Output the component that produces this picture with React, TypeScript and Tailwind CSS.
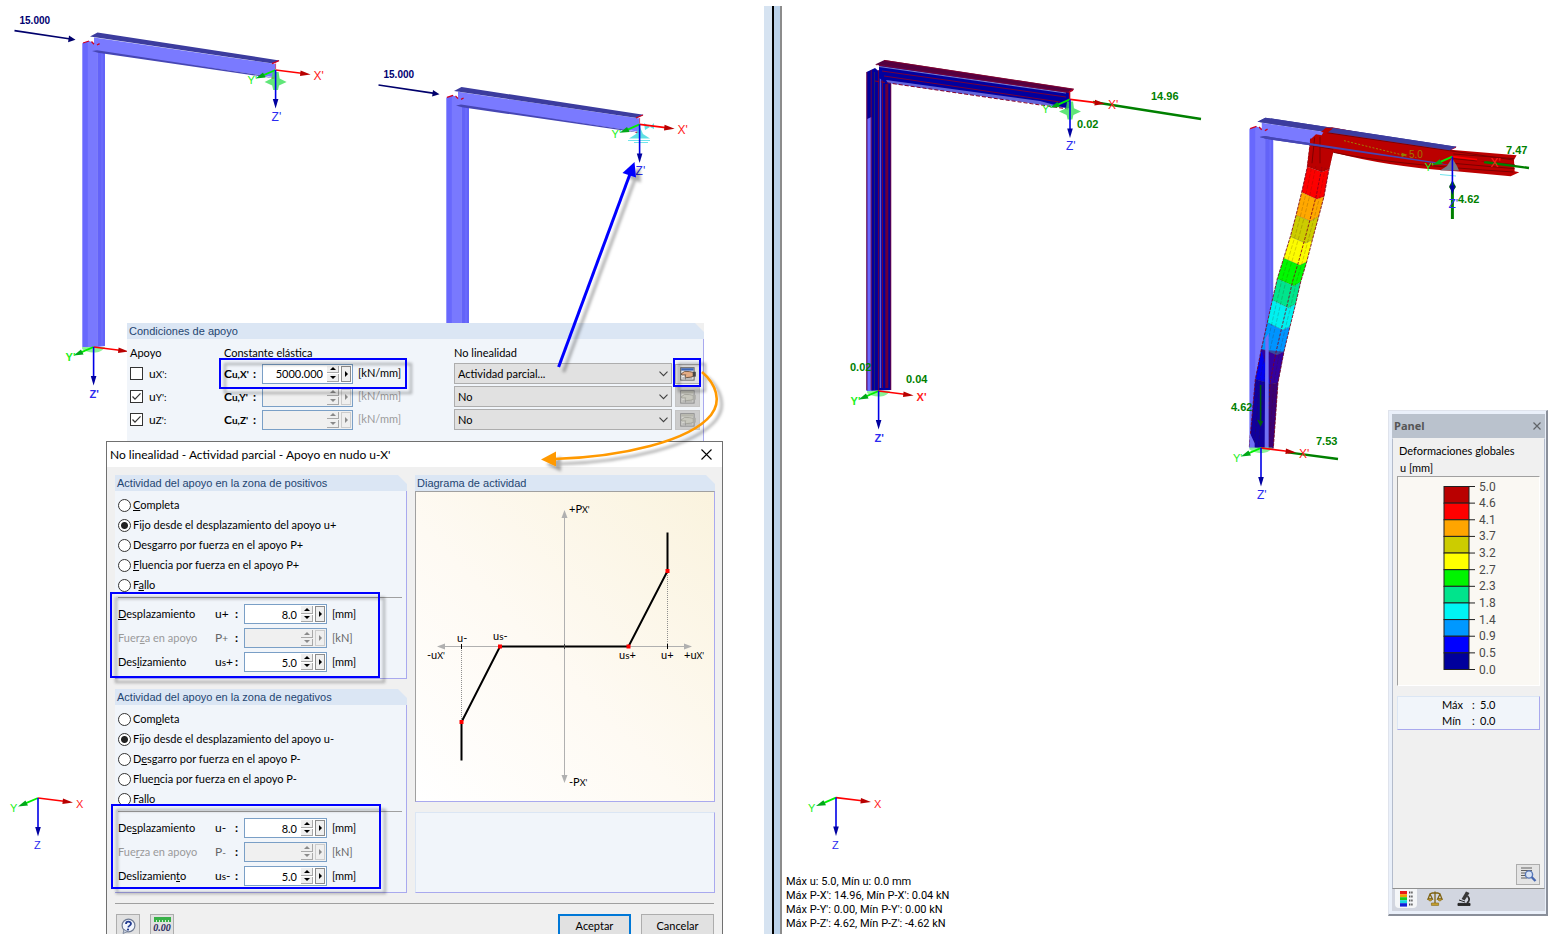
import type { ReactNode } from 'react'

const ui = "font-['Lato','Liberation_Sans',sans-serif]"
const arial = "font-['Liberation_Sans',sans-serif]"

/* ---------- 3D model drawing ---------- */

type AxesProps = {
  x: number
  y: number
  prime?: boolean
  bold?: boolean
  showX?: boolean
}

function Axes({ x, y, prime = true, bold = false, showX = true }: AxesProps) {
  const p = prime ? "'" : ''
  const size = bold || !prime ? 11 : 12
  return (
    <g transform={`translate(${x} ${y})`} fontSize={size} fontWeight={bold ? 700 : 400}>
      <path d="M0 0 L26 3.2" stroke="#ff0000" strokeWidth="1.6" />
      <path d="M25 0.4 L35 4.4 L24.4 6 Z" fill="#b80000" />
      <path d="M0 0 L-12 5.2" stroke="#00f000" strokeWidth="1.8" />
      <path d="M-20 8.4 L-12.6 2.6 L-10 7.6 Z" fill="#00a818" />
      <path d="M0 0 V30" stroke="#0000e8" strokeWidth="1.6" />
      <path d="M-2.8 29 H2.8 L0 38.5 Z" fill="#0000a0" />
      {showX && <text x="38" y="10" fill="#ff2020">X{p}</text>}
      <text x="-28" y="14" fill="#20f020" fontSize="11">Y{p}</text>
      <text x="-4" y="51" fill="#2a2af0">Z{p}</text>
    </g>
  )
}

function Flanges() {
  return (
    <g>
      <path d="M90 36.6 L97.5 32.6 L279.5 60.4 L273 63.6 Z" fill="#3c3c9e" />
      <path d="M92 51 L97 50.2 L262 75.4 L275 78.4 L98 52.8 Z" fill="#4646b4" />
    </g>
  )
}

function Frame() {
  return (
    <g>
      <path d="M82.3 43.2 L89 41 L96.5 44 V347 H82.3 Z" fill="#6868fd" />
      <path d="M87.8 41.4 L97.2 44.5 V347 H87.8 Z" fill="#7979fe" />
      <path d="M97.2 50 L105 52 V346 L97.2 347 Z" fill="#6363f8" />
      <path d="M102 52 V346" stroke="#7272ff" strokeWidth="1" />
      <path d="M94 37.4 L275.6 64 V77.4 L97 51.4 L94 49 Z" fill="#7a7aff" />
      <Flanges />
      <path d="M90 38.6 L93.6 37.4 V42.5 L91 40.5 Z" fill="#ffffff" />
      <path d="M83 43 L89 41 M91.5 41.5 L94 44.2 M97 45 L99.6 43.6 M272 63.6 L279 60.6 M271.6 78 H274.5" stroke="#d00020" strokeWidth="1.3" />
      <path d="M275.6 63.5 V69" stroke="#d03060" strokeWidth="0.8" />
    </g>
  )
}

function Load({ x, y }: { x: number; y: number }) {
  return (
    <g transform={`translate(${x} ${y})`}>
      <text x="5" y="-7" fontSize="10" fontWeight="700" fill="#000070">15.000</text>
      <path d="M0 0 L56 8.4" stroke="#00006c" strokeWidth="1.6" />
      <path d="M54.5 5 L61 9.2 L53.6 11.6 Z" fill="#00006c" />
    </g>
  )
}

function Support({ x, y }: { x: number; y: number }) {
  return (
    <g transform={`translate(${x} ${y})`} fill="#38e058" opacity="0.8">
      <path d="M-11 12 L-4 8.6 L-3 2 H3 L4 8.6 L11 12 L3.4 15.4 L2.4 20 H-2.4 L-3.4 15.4 Z" />
    </g>
  )
}

function BaseSupport({ x, y }: { x: number; y: number }) {
  return <path transform={`translate(${x} ${y})`} d="M-11.5 0 H11.5 C9 4 5 5.6 0 5.6 C-5 5.6 -9 4 -11.5 2 Z" fill="#6cf07c" opacity="0.8" />
}

function LeftModel() {
  return (
    <svg className={`absolute left-0 top-0 ${arial}`} width="764" height="934" viewBox="0 0 764 934" aria-hidden="true">
      <Load x={14.5} y={30.6} />
      <Load x={378.5} y={85} />
      <Frame />
      <Support x={275.6} y={70} />
      <Axes x={275.6} y={70} />
      <BaseSupport x={93.6} y={347} />
      <Axes x={93.6} y={347} bold showX={false} />
      <g transform="translate(364 54.4)">
        <Frame />
      </g>
      <path d="M629 138.5 L636 134 L639.5 126 L643 134 L650 138.5 Z M644 123 L650 127 L654 123 V129 L650 127 L645 130 Z" fill="#38d8dc" opacity="0.8" />
      <path d="M628 140.5 H650 M634 142.5 H648" stroke="#70e4ec" />
      <Axes x={639.6} y={124.4} />
      <Axes x={38} y={798} prime={false} />
    </svg>
  )
}

// contour bands of the deformed column, top to bottom
const bands = [
  { c: '#b90000', l: [272, 116], m: [300, 122], r: [340, 140] },
  { c: '#fc0000', l: [262, 200], m: [306, 216], r: [327, 208] },
  { c: '#ffa800', l: [245, 277], m: [290, 298], r: [312, 290] },
  { c: '#cccc00', l: [228, 346], m: [272, 364], r: [296, 350] },
  { c: '#fcfc00', l: [211, 410], m: [256, 430], r: [277, 420] },
  { c: '#00f800', l: [191, 475], m: [240, 496], r: [260, 486] },
  { c: '#00e48c', l: [172, 536], m: [222, 558], r: [242, 546] },
  { c: '#00f0f0', l: [157, 600], m: [205, 624], r: [227, 612] },
  { c: '#0094ff', l: [142, 668], m: [188, 690], r: [210, 680] },
  { c: '#0000f0', l: [124, 748], m: [170, 765], r: [192, 755] },
  { c: '#10009c', l: [106, 838], m: [152, 852], r: [174, 848] },
  { c: '#10009c', l: [88, 1040], m: [130, 1048], r: [160, 1045] },
]

function along(t: number) {
  return 'M' + bands.map((b) => `${b.l[0] + (b.r[0] - b.l[0]) * t} ${b.l[1] + (b.r[1] - b.l[1]) * t}`).join(' L')
}

function DeformedShape() {
  return (
    <g transform="translate(1220 100) scale(0.3333)">
      {bands.slice(0, -1).map((b, i) => {
        const n = bands[i + 1]
        return (
          <path key={i} d={`M${b.l} L${b.m} L${b.r} L${n.r} L${n.m} L${n.l} Z`} fill={b.c} stroke="#00000040" strokeWidth="1.5" />
        )
      })}
      <path d="M124 748 L192 755 L174 848 L160 1045 H140 L150 850 Z" fill="#68004c" opacity="0.5" />
      <path d={along(0.2) + along(0.38) + along(0.82)} fill="none" stroke="#40200060" strokeWidth="1.6" strokeDasharray="12 5" />
      <path d={along(0) + along(0.66) + along(1)} fill="none" stroke="#80001c" strokeWidth="2.4" strokeDasharray="9 4" />
      <path d="M136 715 L146 700 V1045 H134 Z M90 1000 L104 1030 V1045 H88 Z" fill="#7070f4" />
      <path d="M272 118 L288 103 L305 106 L318 84 L336 82 L700 150 L890 166 L882 180 L884 214 L898 217 L872 229 L700 213 Q500 200 340 157 L328 205 L262 196 Z" fill="#bb0000" />
      <path d="M274 136 L340 148 M320 98 L880 180 M340 157 Q500 192 880 216 M700 162 L882 176 M700 176 L884 194 M700 190 L884 206 M300 110 V190 M284 112 L276 190" fill="none" stroke="#7c0000" strokeWidth="3" />
      <path d="M372 122 L560 168" stroke="#a08000" strokeWidth="3" strokeDasharray="6 5" />
      <path d="M545 158 L562 164 L545 171 Z" fill="#908000" />
    </g>
  )
}

function RightModel() {
  return (
    <svg className={`absolute left-0 top-0 ${arial}`} width="780" height="934" viewBox="782 0 780 934" aria-hidden="true">
      <path d="M866.6 72 L875 68 L891 82 V390 L866.6 391 Z" fill="#00009c" />
      <path d="M867.2 119 L871.4 117 V391 H867.2 Z" fill="#6a6aff" />
      <path d="M866.8 72 V390 M871.2 70 V390 M878.4 70 V391 M882.5 72 V388 M890.8 84 V390" stroke="#780038" strokeWidth="0.9" />
      <path d="M874.5 72 V390" stroke="#20206c" strokeWidth="1" />
      <path d="M880.5 74 V388" stroke="#5a5ad8" strokeWidth="1.4" />
      <path d="M886.8 84 V388" stroke="#68003c" strokeWidth="3" />
      <path d="M879 64.5 L1070 91 V108.5 L886 82.5 L879 78 Z" fill="#0000a0" />
      <path d="M886 80 L1040 101 L1066 108 L888 83 Z" fill="#6464d8" />
      <path d="M875 64.6 L884.5 60 L1074 89 L1069 92.4 Z" fill="#540040" />
      <path d="M879 66.5 L1066 93" stroke="#7a7ac8" strokeWidth="1.2" />
      <path d="M884 60.4 L1074 89.2 M876 64.8 L1069 92.4 M882 71 L1066 97 M884 76 L1060 102" fill="none" stroke="#84002c" strokeWidth="0.9" />
      <path d="M875 81 L892 83.5 L1068 109" fill="none" stroke="#84002c" strokeWidth="1" strokeDasharray="4 2" />
      <path d="M875 66 L878.6 65 V69 L876 68 Z" fill="#ffffff" />
      <path d="M1069 92 L1073 90 M1069.6 92 V100" stroke="#c00020" strokeWidth="1.4" />
      <Support x={1070} y={99.6} />
      <path d="M1093 102 L1201 119" stroke="#008000" strokeWidth="2.4" />
      <Axes x={1070} y={99.4} />
      <BaseSupport x={878.6} y={391} />
      <Axes x={878.6} y={391} bold />

      <g transform="translate(1163 83.4) scale(1.05)">
        <Frame />
      </g>
      <DeformedShape />
      <g transform="translate(1163 83.4) scale(1.05)">
        <Flanges />
      </g>
      <path d="M1321 132 L1326 127.5 L1333 128.4 L1327 133 Z" fill="#b90000" />
      <path d="M1440 170.5 L1447 166 L1452 158 L1457 166 L1459 170.5 Z" fill="#7c7c88" />
      <path d="M1440 174.5 L1456 176" stroke="#70e4ec" />
      <path d="M1484 162 L1529 168" stroke="#008000" strokeWidth="2.4" />
      <path d="M1452.4 185 V219" stroke="#008000" strokeWidth="3" />
      <path d="M1449 187 L1452.4 180 L1456 187 L1452.4 192 Z" fill="#006000" />
      <Axes x={1452.4} y={156.6} />
      <path d="M1260.6 385 V424 M1258 420 L1260.6 425 L1262.4 421" fill="none" stroke="#005c10" strokeWidth="1.6" />
      <path d="M1288 452.4 L1338 459" stroke="#008000" strokeWidth="2.4" />
      <BaseSupport x={1261} y={447.6} />
      <Axes x={1261} y={448} />
      <Axes x={836} y={797.6} prime={false} />

      <g fontSize="11" fontWeight="700" fill="#008000">
        <text x="1151" y="100">14.96</text>
        <text x="1077" y="128">0.02</text>
        <text x="850" y="371">0.02</text>
        <text x="906" y="383">0.04</text>
        <text x="1506" y="154">7.47</text>
        <text x="1458" y="203">4.62</text>
        <text x="1231" y="411">4.62</text>
        <text x="1316" y="445">7.53</text>
      </g>
      <text x="1409" y="158" fontSize="10" fill="#a07800">5.0</text>
    </svg>
  )
}

/* ---------- form controls ---------- */

type StepperProps = {
  id: string
  value?: string
  disabled?: boolean
}

function Stepper({ id, value = '', disabled = false }: StepperProps) {
  const tri = disabled ? '#8a8a8a' : '#000000'
  return (
    <span className={`flex h-5 w-full items-center border border-[#7a9fc6] pr-px ${disabled ? 'bg-[#f0f0f0]' : 'bg-white'}`}>
      <input
        id={id}
        type="text"
        defaultValue={value}
        disabled={disabled}
        className="h-full w-0 min-w-0 flex-1 bg-transparent pr-1 text-right text-[11px] leading-4 text-black outline-none"
      />
      <span className="flex h-4 w-3 flex-col gap-px">
        <button type="button" disabled={disabled} aria-label="Aumentar" className="flex flex-1 items-center justify-center border-b border-r border-[#a8a8a8] bg-[#efefef]">
          <svg width="6" height="3" viewBox="0 0 6 3"><path d="M0 3 L3 0 L6 3 Z" fill={tri} /></svg>
        </button>
        <button type="button" disabled={disabled} aria-label="Disminuir" className="flex flex-1 items-center justify-center border-b border-r border-[#a8a8a8] bg-[#efefef]">
          <svg width="6" height="3" viewBox="0 0 6 3"><path d="M0 0 H6 L3 3 Z" fill={tri} /></svg>
        </button>
      </span>
      <button type="button" disabled={disabled} aria-label="Más opciones" className={`ml-0.5 flex h-4 w-[10px] items-center justify-center border bg-[#efefef] ${disabled ? 'border-[#cccccc]' : 'border-[#8c8c8c]'}`}>
        <svg width="3" height="6" viewBox="0 0 3 6"><path d="M0 0 L3 3 L0 6 Z" fill={tri} /></svg>
      </button>
    </span>
  )
}

function GroupTitle({ children }: { children: ReactNode }) {
  return (
    <div className="flex h-4 bg-[#f0f0f0]">
      <h2 className={`flex-1 bg-[#dbe6f4] pl-0.5 text-[11px] leading-4 text-[#1f4571] ${arial}`}>{children}</h2>
      <svg className="h-4 w-[11px]" viewBox="0 0 11 16" aria-hidden="true">
        <path d="M0 0 L2 0 L11 9 V16 H0 Z" fill="#dbe6f4" />
      </svg>
    </div>
  )
}

function EditIcon({ off = false }: { off?: boolean }) {
  return (
    <svg width="16" height="14" viewBox="0 0 16 14" aria-hidden="true" opacity={off ? 0.6 : 1}>
      <rect x="0.7" y="0.7" width="13.4" height="12.4" fill={off ? '#d8d8d0' : '#f0f0f0'} stroke="#606060" />
      <rect x="1.2" y="1.2" width="12.4" height="2.4" fill={off ? '#a8a898' : '#3c64b4'} />
      <path d="M2.4 11 H12.4 M5.5 9.6 V12.5" stroke="#707070" strokeWidth="0.8" />
      <path d="M1 7 L4.6 4.4 L9.5 4.6 L13.4 5.4 V9.4 L10.4 10.2 L6.6 10.6 L4.8 9.2 L5.8 7.8 L2 8 Z" fill={off ? '#c4c4b4' : '#e4ac84'} stroke={off ? '#808070' : '#5c4434'} strokeWidth="0.8" />
      <rect x="12.8" y="4.8" width="3" height="4.8" fill={off ? '#989890' : '#484848'} />
    </svg>
  )
}

const supports = [
  { axis: "X'", checked: false, value: '5000.000', mode: 'Actividad parcial...' },
  { axis: "Y'", checked: true, value: '', mode: 'No' },
  { axis: "Z'", checked: true, value: '', mode: 'No' },
]

function SupportConditions() {
  return (
    <section className={`absolute left-[127px] top-[323px] w-[577px] ${ui} text-[11px] text-black`}>
      <GroupTitle>Condiciones de apoyo</GroupTitle>
      <div className="border-r border-[#a9a9ee] bg-[#f1f5fa] pb-8 pl-[3px] pt-1.5">
        <div className="mb-px grid h-4 grid-cols-[94px_230px_1fr] items-center leading-4">
          <span>Apoyo</span>
          <span>Constante elástica</span>
          <span>No linealidad</span>
        </div>
        {supports.map((s) => {
          const off = !s.value
          return (
            <div key={s.axis} className="grid h-[23px] grid-cols-[19px_75px_38px_96px_96px_221px_25px] items-center">
              <span className="relative block size-[13px]">
                <input
                  id={`fix-${s.axis}`}
                  type="checkbox"
                  defaultChecked={s.checked}
                  className="peer block size-[13px] appearance-none border border-[#333333] bg-white"
                />
                <svg className="pointer-events-none absolute inset-0 hidden size-[13px] peer-checked:block" viewBox="0 0 13 13" aria-hidden="true">
                  <path d="M2.5 6.5 L5 9.2 L10.5 3.4" fill="none" stroke="#333333" strokeWidth="1.2" />
                </svg>
              </span>
              <label htmlFor={`fix-${s.axis}`} className="text-[12px] leading-4">
                u<span className="text-[10px]">{s.axis}:</span>
              </label>
              <label htmlFor={`spring-${s.axis}`} className="flex justify-between pr-1.5 text-[12px] font-bold leading-4">
                <span>C<span className="text-[10px]">u,{s.axis}</span></span>
                <span>:</span>
              </label>
              <span className="block w-[91px]">
                <Stepper id={`spring-${s.axis}`} value={s.value} disabled={off} />
              </span>
              <span className={off ? 'text-[#9a9a9a]' : ''}>[kN/mm]</span>
              <span className="relative block w-[218px]">
                <select aria-label={`No linealidad ${s.axis}`} defaultValue={s.mode} className="block h-[21px] w-full appearance-none border border-[#adadad] bg-[#e1e1e1] pl-[3px] text-[11px] leading-4">
                  <option>{s.mode}</option>
                </select>
                <svg className="pointer-events-none absolute right-1 top-2 h-[6px] w-[9px]" viewBox="0 0 9 6" aria-hidden="true">
                  <path d="M0.5 0.7 L4.5 4.7 L8.5 0.7" fill="none" stroke="#404040" strokeWidth="1.1" />
                </svg>
              </span>
              <button type="button" disabled={off} aria-label="Editar no linealidad" className={`flex h-5 w-[25px] items-center justify-center border ${off ? 'border-[#c4c4c4] bg-[#cccccc]' : 'border-[#adadad] bg-[#e1e1e1]'}`}>
                <EditIcon off={off} />
              </button>
            </div>
          )
        })}
      </div>
    </section>
  )
}

type ActivityGroupProps = {
  title: string
  name: string
  sign: string
  options: ReactNode[]
  labels: ReactNode[]
}

function ActivityGroup({ title, name, sign, options, labels }: ActivityGroupProps) {
  const fields = [
    { sym: <>u{sign}</>, value: '8.0', unit: '[mm]' },
    { sym: <>P<span className="text-[10px]">{sign}</span></>, value: '', unit: '[kN]' },
    { sym: <>u<span className="text-[10px]">s</span>{sign}</>, value: '5.0', unit: '[mm]' },
  ]
  return (
    <section>
      <GroupTitle>{title}</GroupTitle>
      <div className="border-b border-r border-[#a9a9ee] bg-[#f1f5fa] pb-1 pl-[3px] pr-1 pt-1">
        {options.map((o, i) => (
          <label key={i} className="flex h-5 items-center gap-0.5 text-[11px]">
            <input
              type="radio"
              name={name}
              defaultChecked={i === 1}
              className="size-[13px] appearance-none rounded-full border border-[#333333] bg-white checked:bg-[radial-gradient(circle,#222222_3px,#ffffff_4px)]"
            />
            <span>{o}</span>
          </label>
        ))}
        <hr className="mb-1 mt-0.5 border-[#a0a0a0]" />
        {fields.map((f, i) => (
          <div key={i} className={`grid h-6 grid-cols-[97px_29px_83px_1fr] items-center text-[11px] ${f.value ? '' : 'text-[#9a9a9a]'}`}>
            <label htmlFor={`${name}-${i}`}>{labels[i]}</label>
            <span className={`flex justify-between pr-1.5 text-[12px] ${f.value ? '' : 'text-[#666666]'}`}>
              <span>{f.sym}</span>
              <span className="font-bold text-black">:</span>
            </span>
            <Stepper id={`${name}-${i}`} value={f.value} disabled={!f.value} />
            <span className={`pl-[5px] ${f.value ? '' : 'text-[#666666]'}`}>{f.unit}</span>
          </div>
        ))}
      </div>
    </section>
  )
}

function ActivityDiagram() {
  return (
    <svg className="block h-[309px] w-full" viewBox="416 492 298 309" role="img" aria-label="Diagrama de actividad">
      <defs>
        <linearGradient id="sheet" x1="1" y1="0" x2="0" y2="1">
          <stop offset="0" stopColor="#faf3de" />
          <stop offset="0.55" stopColor="#fefaf3" />
          <stop offset="1" stopColor="#ffffff" />
        </linearGradient>
      </defs>
      <rect x="416" y="492" width="298" height="309" fill="url(#sheet)" />
      <path d="M564.5 514 V778 M440 646.5 H690" stroke="#b0b0b0" />
      <path d="M564.5 510 L561.5 518 H567.5 Z M564.5 783 L561.5 775 H567.5 Z M437 646.5 L445 643.5 V649.5 Z M692 646.5 L684 643.5 V649.5 Z" fill="#b0b0b0" />
      <path d="M461.5 648 V722 M667.5 571 V646" stroke="#909090" strokeDasharray="1 1" />
      <path d="M461.5 644 V649 M667.5 644 V649" stroke="#000000" />
      <path d="M667.5 532.5 V571 L628.5 646.5 H500 L461.5 722 V760.5" fill="none" stroke="#000000" strokeWidth="2" />
      <path d="M564.5 644 V649" stroke="#404040" />
      <path d="M665.5 569 h4 v4 h-4 Z M626.5 644.5 h4 v4 h-4 Z M498 644.5 h4 v4 h-4 Z M459.5 720 h4 v4 h-4 Z" fill="#ff0000" />
      <g fontSize="11" fill="#000000">
        <text x="569" y="513">+P<tspan fontSize="9">X'</tspan></text>
        <text x="569" y="786">-P<tspan fontSize="9">X'</tspan></text>
        <text x="457" y="642">u-</text>
        <text x="493" y="640">u<tspan fontSize="10">s</tspan>-</text>
        <text x="619" y="659">u<tspan fontSize="10">s</tspan>+</text>
        <text x="661" y="659">u+</text>
        <text x="684" y="659">+u<tspan fontSize="9">X'</tspan></text>
        <text x="427" y="659">-u<tspan fontSize="9">X'</tspan></text>
      </g>
    </svg>
  )
}

function NonlinearityDialog() {
  return (
    <div role="dialog" aria-labelledby="dialog-title" className={`absolute left-[106px] top-[441px] w-[617px] border border-[#707070] bg-[#f0f0f0] ${ui} text-black`}>
      <div className="flex h-[25px] items-center justify-between bg-white pl-[3px] pr-2.5">
        <h1 id="dialog-title" className="text-[12px] leading-4">No linealidad - Actividad parcial - Apoyo en nudo u-X'</h1>
        <button type="button" aria-label="Cerrar" className="flex size-3 items-center justify-center">
          <svg width="11" height="11" viewBox="0 0 11 11"><path d="M0.5 0.5 L10.5 10.5 M10.5 0.5 L0.5 10.5" stroke="#000000" strokeWidth="1.1" /></svg>
        </button>
      </div>
      <div className="flex gap-2 pl-2 pr-[7px] pt-2">
        <div className="flex w-[292px] flex-col gap-2.5">
          <ActivityGroup
            title="Actividad del apoyo en la zona de positivos"
            name="positivos"
            sign="+"
            options={[
              <><u>C</u>ompleta</>,
              'Fijo desde el desplazamiento del apoyo u+',
              <>Des<u>g</u>arro por fuerza en el apoyo P+</>,
              <><u>F</u>luencia por fuerza en el apoyo P+</>,
              <>F<u>a</u>llo</>,
            ]}
            labels={[<><u>D</u>esplazamiento</>, <>Fuer<u>z</u>a en apoyo</>, <>Des<u>l</u>izamiento</>]}
          />
          <ActivityGroup
            title="Actividad del apoyo en la zona de negativos"
            name="negativos"
            sign="-"
            options={[
              <>Com<u>p</u>leta</>,
              'Fijo desde el desplazamiento del apoyo u-',
              <>D<u>e</u>sgarro por fuerza en el apoyo P-</>,
              <>Flue<u>n</u>cia por fuerza en el apoyo P-</>,
              <>Fall<u>o</u></>,
            ]}
            labels={[<>De<u>s</u>plazamiento</>, <>Fue<u>r</u>za en apoyo</>, <>Deslizamien<u>t</u>o</>]}
          />
        </div>
        <div className="flex flex-1 flex-col gap-2.5">
          <section>
            <GroupTitle>Diagrama de actividad</GroupTitle>
            <div className="border border-b-[#a9a9ee] border-l-[#a0a0a0] border-r-[#a9a9ee] border-t-[#a0a0a0]">
              <ActivityDiagram />
            </div>
          </section>
          <div className="flex-1 border border-b-[#a9a9ee] border-l-[#dbe6f4] border-r-[#a9a9ee] border-t-[#dbe6f4] bg-[#f1f5fa]" />
        </div>
      </div>
      <hr className="mx-2 mt-2.5 border-[#a0a0a0]" />
      <div className="flex items-start gap-2.5 pl-[9px] pr-2 pt-2.5">
        <button type="button" aria-label="Ayuda" className="flex h-6 w-6 items-center justify-center border border-[#adadad] bg-[#e1e1e1]">
          <svg width="17" height="17" viewBox="0 0 17 17">
            <circle cx="8.5" cy="7.5" r="6.4" fill="#f0f4fc" stroke="#707c94" strokeWidth="1.2" />
            <path d="M3 15.5 L4 11.5 L7.5 13.6 Z" fill="#c8d0e0" stroke="#707c94" strokeWidth="0.8" />
            <path d="M6 6 C6 3 11 3 11 5.8 C11 7.6 8.4 7.6 8.2 9.4" fill="none" stroke="#203a90" strokeWidth="1.8" />
            <circle cx="8" cy="11.6" r="1.1" fill="#203a90" />
          </svg>
        </button>
        <button type="button" aria-label="Decimales" className="flex h-6 w-6 flex-col items-center border border-[#adadad] bg-[#e1e1e1] pt-0.5">
          <svg width="17" height="5" viewBox="0 0 17 5">
            <rect width="17" height="5" fill="#38b048" />
            <path d="M2.5 5 V3 M5.5 5 V3 M8.5 5 V3 M11.5 5 V3 M14.5 5 V3" stroke="#d0f0d0" />
          </svg>
          <span className="font-['Liberation_Serif',serif] text-[10px] font-bold italic leading-3 text-[#28285c]">0.00</span>
        </button>
        <span className="flex-1" />
        <button type="submit" className="h-6 w-[73px] border-2 border-[#0078d7] bg-[#e1e1e1] text-[11px] leading-4">Aceptar</button>
        <button type="button" className="h-6 w-[73px] border border-[#adadad] bg-[#e1e1e1] text-[11px] leading-4">Cancelar</button>
      </div>
    </div>
  )
}

function Callouts() {
  return (
    <svg className="pointer-events-none absolute left-0 top-0" width="764" height="934" viewBox="0 0 764 934" aria-hidden="true">
      <defs>
        <filter id="soft" x="0" y="0" width="764" height="934" filterUnits="userSpaceOnUse">
          <feDropShadow dx="5" dy="5" stdDeviation="1.8" floodColor="#000000" floodOpacity="0.32" />
        </filter>
      </defs>
      <g fill="none" stroke="#0000ff" strokeWidth="2" filter="url(#soft)">
        <rect x="220" y="359" width="186" height="29" />
        <rect x="674" y="359" width="26" height="27" />
        <rect x="111" y="593" width="268" height="84" />
        <rect x="112" y="805" width="268" height="83" />
        <path d="M558.6 367 L630 174" strokeWidth="3" />
        <path d="M634.5 162 L636 177.5 L622.5 173 Z" fill="#0000ff" stroke="none" />
      </g>
      <g filter="url(#soft)">
        <path d="M702 372 C716 384 722 401 711 415 C690 441 622 457 554 459" fill="none" stroke="#ff9900" strokeWidth="2.6" />
        <path d="M541 459.5 L556 451.5 V466.5 Z" fill="#ff9900" />
      </g>
    </svg>
  )
}

/* ---------- results panel ---------- */

const scale = ['#b90000', '#ff0000', '#ffa500', '#cccc00', '#ffff00', '#00f400', '#00e48c', '#00f4f4', '#0098ff', '#0000ff', '#00009c']
const marks = ['5.0', '4.6', '4.1', '3.7', '3.2', '2.7', '2.3', '1.8', '1.4', '0.9', '0.5', '0.0']

function ColorScale() {
  const step = 183 / 11
  return (
    <svg className="mx-auto block font-['Roboto',sans-serif]" width="142" height="208" viewBox="0 0 142 208" role="img" aria-label="Escala de deformaciones">
      {scale.map((c, i) => (
        <rect key={c} x="46" y={9.5 + i * step} width="25" height={step} fill={c} stroke="#202020" />
      ))}
      {marks.map((m, i) => (
        <g key={m}>
          <path d={`M71 ${9.5 + i * step} H77`} stroke="#202020" />
          <text x="81" y={13.5 + i * step} fontSize="12" fill="#4a4a4a">{m}</text>
        </g>
      ))}
    </svg>
  )
}

function ResultsPanel() {
  return (
    <aside className={`absolute right-3.5 top-[410px] flex h-[506px] w-[160px] flex-col border-b-2 border-l border-r-2 border-t border-b-[#8a8f9a] border-l-[#dfe3ec] border-r-[#8a8f9a] border-t-[#dfe3ec] bg-[#eaf0fa] py-[3px] pl-[3px] pr-px ${ui} text-black`}>
      <div className="flex h-6 items-center justify-between bg-[#bac2cd] pl-0.5 pr-[3px]">
        <h2 className="font-['Open_Sans',sans-serif] text-[11px] font-bold text-[#555555]">Panel</h2>
        <button type="button" aria-label="Cerrar panel" className="flex size-2.5 items-center justify-center">
          <svg width="8" height="8" viewBox="0 0 8 8"><path d="M0.5 0.5 L7.5 7.5 M7.5 0.5 L0.5 7.5" stroke="#606468" strokeWidth="1.2" /></svg>
        </button>
      </div>
      <div className="flex flex-1 flex-col border border-b-[#909090] border-l-[#b4bccc] border-r-[#b4bccc] border-t-[#f0f0f0] bg-[#f0f0f0] px-1 pb-[3px] pt-1">
        <p className="pl-0.5 text-[11px] leading-4">Deformaciones globales</p>
        <p className="pl-[3px] text-[11px] leading-[17px]">u [mm]</p>
        <div className="border border-b-white border-l-[#a0a0a0] border-r-white border-t-[#a0a0a0] bg-[#faf8f3]">
          <ColorScale />
        </div>
        <dl className="mt-2.5 grid grid-cols-[30px_8px_1fr] border border-b-[#a9a9ee] border-l-[#dbe6f4] border-r-[#a9a9ee] border-t-[#dbe6f4] bg-[#f1f5fa] pl-11 text-[11px] leading-4">
          <dt className="col-start-1">Máx</dt>
          <dd className="col-span-2 flex gap-2"><span className="w-0">:</span>5.0</dd>
          <dt className="col-start-1">Mín</dt>
          <dd className="col-span-2 flex gap-2"><span className="w-0">:</span>0.0</dd>
        </dl>
        <button type="button" aria-label="Detalles" className="ml-auto mt-auto flex h-[21px] w-6 items-center justify-center border border-[#adadad] bg-[#e4e4e4]">
          <svg width="17" height="17" viewBox="0 0 17 17">
            <path d="M1 2 H12 M1 4.5 H12 M1 7 H6 M1 9.5 H6 M1 12 H7" stroke="#606060" />
            <circle cx="9" cy="8.5" r="3.6" fill="#d4e2f8" fillOpacity="0.8" stroke="#5878b8" strokeWidth="1.4" />
            <path d="M11.6 11 L15.5 15" stroke="#4868b0" strokeWidth="2.4" />
          </svg>
        </button>
      </div>
      <div className="flex h-[22px] items-start gap-[7px] bg-[#d2d6e0] pl-[3px]">
        <button type="button" aria-label="Escala de colores" className="flex h-[19px] w-[22px] items-center justify-center rounded-b-sm bg-[#f4f6f8]">
          <svg width="15" height="16" viewBox="0 0 15 16">
            <path d="M1 0 h7 v3.2 h-7 Z" fill="#e81818" />
            <path d="M1 3.2 h7 v3 h-7 Z" fill="#f0a000" />
            <path d="M1 6.2 h7 v3 h-7 Z" fill="#18c820" />
            <path d="M1 9.2 h7 v3 h-7 Z" fill="#18d8e0" />
            <path d="M1 12.2 h7 v3.4 h-7 Z" fill="#1020d8" />
            <path d="M10 1.5 h3.6 M10 5.5 h3.6 M10 9.5 h3.6 M10 13.5 h3.6" stroke="#505050" strokeWidth="2" strokeDasharray="1.4 0.8" />
          </svg>
        </button>
        <button type="button" aria-label="Factores" className="flex h-[19px] w-[22px] items-center justify-center">
          <svg width="16" height="15" viewBox="0 0 16 15">
            <path d="M8 0.5 V12 M2.5 3 Q8 0.5 13.5 3 M5 13 H11 M3 3 L1 8 H5.4 L3 3 M13 3 L10.6 8 H15 L13 3" fill="none" stroke="#806414" strokeWidth="1.3" />
            <path d="M0.6 8 H5.8 Q3.2 12 0.6 8 Z M10.2 8 H15.4 Q12.8 12 10.2 8 Z M4.4 12 H11.6 V14.4 H4.4 Z" fill="#c8a030" stroke="#806414" strokeWidth="0.6" />
          </svg>
        </button>
        <button type="button" aria-label="Filtro" className="flex h-[19px] w-[22px] items-center justify-center">
          <svg width="14" height="15" viewBox="0 0 14 15">
            <path d="M9 0.5 L12.5 2 L7.6 9.6 L4.6 8 Z" fill="#383838" />
            <path d="M10.6 5 Q14 9 10 12" fill="none" stroke="#303030" strokeWidth="1.8" />
            <path d="M2 9 L8 11 M1 12.4 H13 V14.6 H1 Z" fill="#282828" stroke="#282828" />
          </svg>
        </button>
      </div>
    </aside>
  )
}

export default function App() {
  return (
    <main className="flex h-screen overflow-hidden bg-white">
      <div className="relative flex-[1_1_764px] overflow-hidden">
        <LeftModel />
        <SupportConditions />
        <NonlinearityDialog />
        <Callouts />
      </div>
      <div className="mt-1.5 flex w-[18px]" aria-hidden="true">
        <div className="w-2 bg-[#d6e3f1]" />
        <div className="w-0.5 bg-black" />
        <div className="w-1.5 bg-[#bad1e9]" />
        <div className="w-0.5 bg-[#8c8c8c]" />
      </div>
      <div className="relative flex-[1_1_780px] overflow-hidden">
        <RightModel />
        <div className="absolute bottom-[3px] left-1 font-['Roboto',sans-serif] text-[11px] leading-[14px] text-black">
          <p>Máx u: 5.0, Mín u: 0.0 mm</p>
          <p>Máx P-X': 14.96, Mín P-X': 0.04 kN</p>
          <p>Máx P-Y': 0.00, Mín P-Y': 0.00 kN</p>
          <p>Máx P-Z': 4.62, Mín P-Z': -4.62 kN</p>
        </div>
        <ResultsPanel />
      </div>
    </main>
  )
}
